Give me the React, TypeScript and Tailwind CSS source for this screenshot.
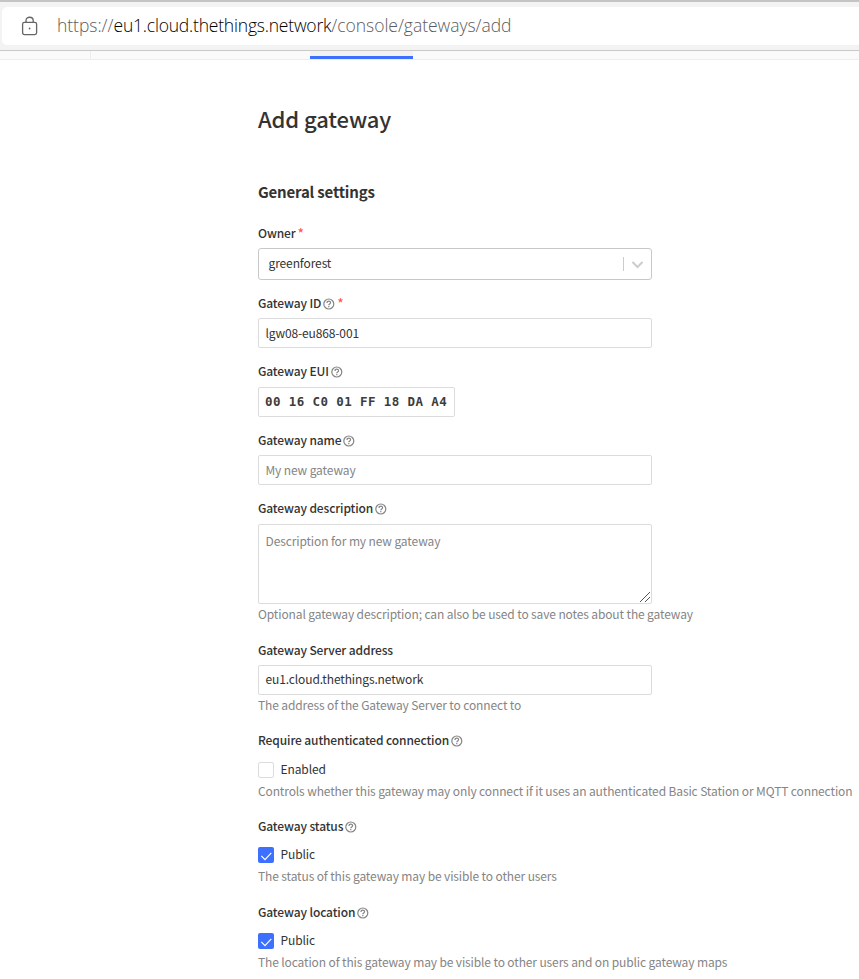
import type { ReactNode } from "react";

function HelpIcon() {
  return (
    <svg className="ml-[2px] mt-[1px] size-[12px] shrink-0" viewBox="0 0 12 12" fill="none" stroke="#858585" strokeWidth="1.2">
      <circle cx="5.8" cy="6" r="5" />
      <path d="M4 4.9C4 2.5 7.6 2.6 7.6 4.8C7.6 6 5.8 6 5.8 7.3" />
      <path d="M5.8 8.1V9.3" />
    </svg>
  );
}

function Label({ text, help, required }: { text: string; help?: boolean; required?: boolean }) {
  return (
    <div className="flex h-5 items-center">
      <span className="whitespace-nowrap text-[12px] font-medium leading-5 tracking-[-0.12px] text-[#333]">{text}</span>
      {help && <HelpIcon />}
      {required && <span className="mb-px ml-[2px] h-5 text-[14px] leading-5 text-[#ff4d4d]">*</span>}
    </div>
  );
}

function Help({ children, spacing }: { children: ReactNode; spacing: string }) {
  return (
    <p className={`h-5 whitespace-nowrap text-[12px] leading-5 tracking-[-0.126px] text-[#858585] ${spacing}`}>{children}</p>
  );
}

function Field({ children, gap }: { children: ReactNode; gap: string }) {
  return <div className={`flex flex-col items-start ${gap}`}>{children}</div>;
}

function Checkbox({ checked, label, spacing }: { checked?: boolean; label: string; spacing: string }) {
  return (
    <div className={`flex h-5 items-center gap-[6.5px] ${spacing}`}>
      {checked ? (
        <span className="flex size-4 items-center justify-center rounded-[2px] bg-[#3d70ff]">
          <svg className="size-4" viewBox="0 0 16 16" fill="none" stroke="#fff" strokeWidth="1.2">
            <path d="M3.3 8.8L7 12.6L13.3 5.8" />
          </svg>
        </span>
      ) : (
        <span className="size-4 rounded-[2px] border border-[#dcdcdc]" />
      )}
      <span className="mb-[2px] text-[12px] leading-5 tracking-[-0.1px] text-[#333]">{label}</span>
    </div>
  );
}

const box = "flex w-[394px] rounded-[2px] border border-[#dcdcdc] bg-white px-[6.5px] text-[12px] tracking-[-0.12px]";

export default function App() {
  return (
    <div className="h-[979px] w-[859px] overflow-hidden bg-white font-['Noto_Sans_CJK_SC','Noto_Sans',sans-serif]">
      <div className="flex h-[51px] flex-col border-b border-[#c9c9c9] bg-[#f3f3f3]">
        <div className="h-[2px] bg-[#c4c4c4]" />
        <div className="ml-[2px] mt-[5px] flex h-[38px] items-center rounded-l-[5px] bg-white pl-[19px]">
          <svg className="h-[20px] w-[18px]" viewBox="0 0 18 20" fill="none" stroke="#666" strokeWidth="1.3">
            <rect x="1.6" y="6.4" width="14" height="12.2" rx="1.8" />
            <path d="M5 6.4V4.4C5 0.2 12.2 0.2 12.2 4.4V6.4" />
            <circle cx="8.6" cy="12.5" r="0.9" fill="#666" stroke="none" />
          </svg>
          <span className="mb-[2px] ml-[18px] whitespace-nowrap font-['Open_Sans',sans-serif] text-[17.5px] font-light tracking-[-0.03px] text-[#5c5c5c]">
            https://<span className="tracking-[-0.2px] text-black">eu1.cloud.thethings.network</span>/console/gateways/add
          </span>
        </div>
      </div>
      <div className="flex h-[9px] border-b border-[#ededed] bg-[#fafafa]">
        <div className="w-[91px] border-r border-[#ededed]" />
        <div className="ml-[219px] h-[8px] w-[103px] border-b-[3px] border-[#3d70ff] bg-[#f2f2f2]" />
      </div>

      <main className="flex flex-col pl-[258px]">
        <h1 className="mt-[38px] h-10 whitespace-nowrap text-[22px] font-medium leading-10 tracking-[-0.1px] text-[#333]">
          Add gateway
        </h1>
        <h2 className="mt-[44px] h-5 whitespace-nowrap text-[15px] font-bold leading-5 tracking-[-0.19px] text-[#333]">
          General settings
        </h2>

        <Field gap="mt-[21px]">
          <Label text="Owner" required />
          <div className="mt-[5px] flex h-8 w-[394px] items-center rounded-[3px] border border-[#c8c8c8] pl-[9.5px] text-[12px] tracking-[-0.11px] text-[#333]">
            <span className="mb-[2px] flex-1">greenforest</span>
            <span className="h-[14px] w-px bg-[#ccc]" />
            <svg className="ml-[7px] mr-[7px] size-[13px]" viewBox="0 0 13 13" fill="none" stroke="#ccc" strokeWidth="2">
              <path d="M1.5 4L6.5 9L11.5 4" />
            </svg>
          </div>
        </Field>

        <Field gap="mt-[13px]">
          <Label text="Gateway ID" help required />
          <div className={`${box} mt-[5px] h-[30px] items-center text-[#333]`}>lgw08-eu868-001</div>
        </Field>

        <Field gap="mt-[13px]">
          <Label text="Gateway EUI" help />
          <div className="mt-[6px] flex h-[30px] w-[197px] items-center whitespace-pre rounded-[2px] border border-[#dcdcdc] px-[6px] font-['DejaVu_Sans_Mono',monospace] text-[12.5px] font-bold tracking-[0.39px] text-[#3c3c3c]">
            00 16 C0 01 FF 18 DA A4
          </div>
        </Field>

        <Field gap="mt-[13px]">
          <Label text="Gateway name" help />
          <div className={`${box} mt-[5px] h-[30px] items-center text-[#858585]`}>My new gateway</div>
        </Field>

        <Field gap="mt-[13px]">
          <Label text="Gateway description" help />
          <div className={`${box} mt-[6px] h-[80px] justify-between pr-[1px] text-[#858585]`}>
            <span className="pt-[6px] leading-5">Description for my new gateway</span>
            <svg className="mb-[1px] size-[10px] self-end" viewBox="0 0 10 10" stroke="#555" strokeWidth="1">
              <path d="M0 10L10 0M5 10L10 5" />
            </svg>
          </div>
          <Help spacing="">Optional gateway description; can also be used to save notes about the gateway</Help>
        </Field>

        <Field gap="mt-[16px]">
          <Label text="Gateway Server address" />
          <div className={`${box} mt-[5px] h-[30px] items-center pb-[2px] text-[#333]`}>eu1.cloud.thethings.network</div>
          <Help spacing="">The address of the Gateway Server to connect to</Help>
        </Field>

        <Field gap="mt-[15px]">
          <Label text="Require authenticated connection" help />
          <Checkbox spacing="mt-[10px]" label="Enabled" />
          <Help spacing="mt-[1px]">
            Controls whether this gateway may only connect if it uses an authenticated Basic Station or MQTT connection
          </Help>
        </Field>

        <Field gap="mt-[15px]">
          <Label text="Gateway status" help />
          <Checkbox spacing="mt-[9px]" checked label="Public" />
          <Help spacing="mt-[1px]">The status of this gateway may be visible to other users</Help>
        </Field>

        <Field gap="mt-[16px]">
          <Label text="Gateway location" help />
          <Checkbox spacing="mt-[9px]" checked label="Public" />
          <Help spacing="mt-[1px]">The location of this gateway may be visible to other users and on public gateway maps</Help>
        </Field>
      </main>
    </div>
  );
}
